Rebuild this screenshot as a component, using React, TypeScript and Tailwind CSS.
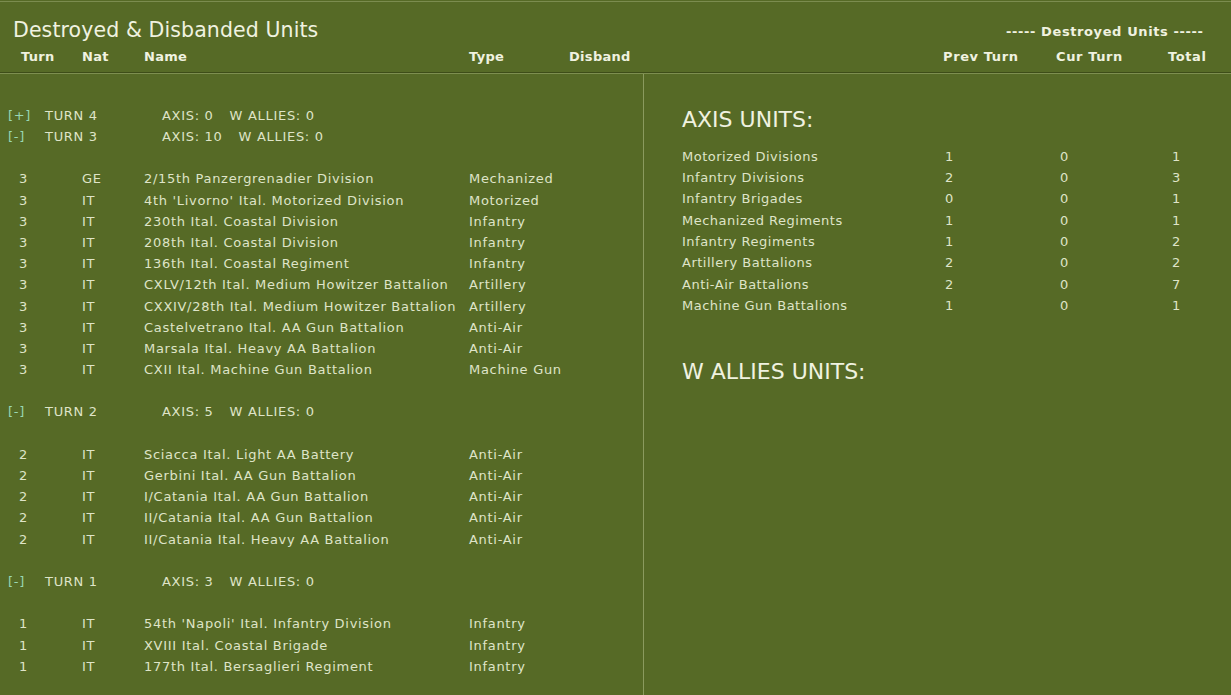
import React from 'react'

type Unit = { turn: number; nat: string; name: string; type: string }
type Group = { turn: number; open: boolean; axis: number; allies: number; units: Unit[] }

const groups: Group[] = [
  { turn: 4, open: false, axis: 0, allies: 0, units: [] },
  {
    turn: 3,
    open: true,
    axis: 10,
    allies: 0,
    units: [
      { turn: 3, nat: 'GE', name: '2/15th Panzergrenadier Division', type: 'Mechanized' },
      { turn: 3, nat: 'IT', name: "4th 'Livorno' Ital. Motorized Division", type: 'Motorized' },
      { turn: 3, nat: 'IT', name: '230th Ital. Coastal Division', type: 'Infantry' },
      { turn: 3, nat: 'IT', name: '208th Ital. Coastal Division', type: 'Infantry' },
      { turn: 3, nat: 'IT', name: '136th Ital. Coastal Regiment', type: 'Infantry' },
      { turn: 3, nat: 'IT', name: 'CXLV/12th Ital. Medium Howitzer Battalion', type: 'Artillery' },
      { turn: 3, nat: 'IT', name: 'CXXIV/28th Ital. Medium Howitzer Battalion', type: 'Artillery' },
      { turn: 3, nat: 'IT', name: 'Castelvetrano Ital. AA Gun Battalion', type: 'Anti-Air' },
      { turn: 3, nat: 'IT', name: 'Marsala Ital. Heavy AA Battalion', type: 'Anti-Air' },
      { turn: 3, nat: 'IT', name: 'CXII Ital. Machine Gun Battalion', type: 'Machine Gun' },
    ],
  },
  {
    turn: 2,
    open: true,
    axis: 5,
    allies: 0,
    units: [
      { turn: 2, nat: 'IT', name: 'Sciacca Ital. Light AA Battery', type: 'Anti-Air' },
      { turn: 2, nat: 'IT', name: 'Gerbini Ital. AA Gun Battalion', type: 'Anti-Air' },
      { turn: 2, nat: 'IT', name: 'I/Catania Ital. AA Gun Battalion', type: 'Anti-Air' },
      { turn: 2, nat: 'IT', name: 'II/Catania Ital. AA Gun Battalion', type: 'Anti-Air' },
      { turn: 2, nat: 'IT', name: 'II/Catania Ital. Heavy AA Battalion', type: 'Anti-Air' },
    ],
  },
  {
    turn: 1,
    open: true,
    axis: 3,
    allies: 0,
    units: [
      { turn: 1, nat: 'IT', name: "54th 'Napoli' Ital. Infantry Division", type: 'Infantry' },
      { turn: 1, nat: 'IT', name: 'XVIII Ital. Coastal Brigade', type: 'Infantry' },
      { turn: 1, nat: 'IT', name: '177th Ital. Bersaglieri Regiment', type: 'Infantry' },
    ],
  },
]

const axisStats = [
  ['Motorized Divisions', 1, 0, 1],
  ['Infantry Divisions', 2, 0, 3],
  ['Infantry Brigades', 0, 0, 1],
  ['Mechanized Regiments', 1, 0, 1],
  ['Infantry Regiments', 1, 0, 2],
  ['Artillery Battalions', 2, 0, 2],
  ['Anti-Air Battalions', 2, 0, 7],
  ['Machine Gun Battalions', 1, 0, 1],
] as const

function GroupBlock({ g }: { g: Group }) {
  return (
    <div>
      <div className="flex h-[21.2px] items-center pl-[8px]">
        <span className="w-[37px] text-[#98d8b4]">{g.open ? '[-]' : '[+]'}</span>
        <span className="w-[117px]">TURN {g.turn}</span>
        <span>AXIS: {g.axis}</span>
        <span className="ml-[16px]">W ALLIES: {g.allies}</span>
      </div>
      {g.open && (
        <>
          <div className="h-[21.2px]" />
          {g.units.map((u) => (
            <div key={u.name} className="flex h-[21.2px] items-center pl-[19px]">
              <span className="w-[63px]">{u.turn}</span>
              <span className="w-[62px]">{u.nat}</span>
              <span className="w-[325px] whitespace-nowrap">{u.name}</span>
              <span className="whitespace-nowrap">{u.type}</span>
            </div>
          ))}
          <div className="h-[21.2px]" />
        </>
      )}
    </div>
  )
}

export default function App() {
  return (
    <div
      className="h-[695px] w-full overflow-hidden bg-[#566a26] text-[#dfe4c8]"
      style={{ fontFamily: '"DejaVu Sans", Verdana, sans-serif' }}
    >
      <div className="h-px bg-[#566a26]" />
      <div className="h-px bg-[#7b8c4f]" />
      {/* header */}
      <div className="flex h-[70px] text-[#f0f2e0]">
        <div className="w-[643px] pl-[13px] pt-[16px]">
          <div className="h-[24px] text-[20.5px] leading-[24px] tracking-[0.1px]">Destroyed &amp; Disbanded Units</div>
          <div className="mt-[7px] flex pl-[8px] text-[13px] font-bold leading-[16px] tracking-[0.3px]">
            <span className="w-[61px]">Turn</span>
            <span className="w-[62px]">Nat</span>
            <span className="w-[325px]">Name</span>
            <span className="w-[100px]">Type</span>
            <span>Disband</span>
          </div>
        </div>
        <div className="flex-1 pt-[22px] text-[13px] font-bold leading-[16px] tracking-[0.6px]">
          <div className="pl-[363px] whitespace-nowrap">----- Destroyed Units -----</div>
          <div className="mt-[9px] flex pl-[300px]">
            <span className="w-[113px]">Prev Turn</span>
            <span className="w-[112px]">Cur Turn</span>
            <span>Total</span>
          </div>
        </div>
      </div>
      <div className="h-px bg-[#3e4d18]" />
      <div className="h-px bg-[#7d8e50]" />
      {/* body */}
      <div className="flex h-[621px]">
        <div className="w-[643px] pt-[31px] text-[13px] tracking-[0.7px]">
          {groups.map((g) => (
            <GroupBlock key={g.turn} g={g} />
          ))}
        </div>
        <div className="w-px bg-[#8a9a5e]" />
        <div className="flex-1 pl-[38px] pt-[33px]">
          <div className="h-[26px] text-[22px] leading-[26px] text-[#f0f2e0]">AXIS UNITS:</div>
          <div className="mt-[13px] text-[13px] tracking-[0.5px]">
            {axisStats.map(([label, prev, cur, total]) => (
              <div key={label} className="flex h-[21.3px] items-center">
                <span className="w-[263px] whitespace-nowrap">{label}</span>
                <span className="w-[115px]">{prev}</span>
                <span className="w-[112px]">{cur}</span>
                <span>{total}</span>
              </div>
            ))}
          </div>
          <div className="mt-[43px] h-[26px] text-[22px] leading-[26px] text-[#f0f2e0]">W ALLIES UNITS:</div>
        </div>
      </div>
    </div>
  )
}
